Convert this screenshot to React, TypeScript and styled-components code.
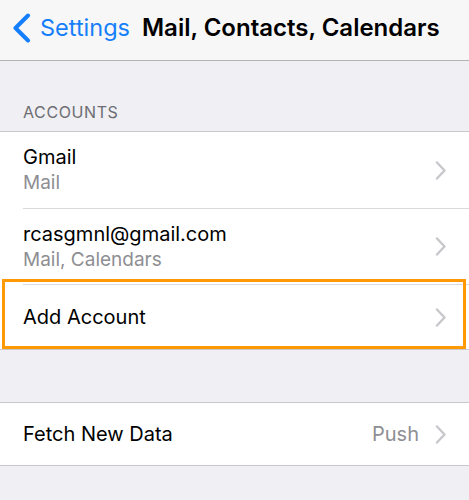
import React from "react";
import styled, { createGlobalStyle } from "styled-components";

const GlobalStyle = createGlobalStyle`
  html, body { margin: 0; padding: 0; }
  body {
    background: #efeff4;
    font-family: Inter, "Liberation Sans", sans-serif;
    -webkit-font-smoothing: antialiased;
  }
`;

const Screen = styled.div`
  width: 469px;
  height: 500px;
  background: #efeff4;
  overflow: hidden;
`;

const NavBar = styled.header`
  height: 61px;
  box-sizing: border-box;
  background: #f7f7f7;
  border-bottom: 1px solid #b2b2b2;
  display: flex;
  align-items: center;
  padding: 0 0 5px 12px;
`;

const BackButton = styled.div`
  display: flex;
  align-items: center;
  color: #157efb;
  font-size: 23.5px;
`;

const BackLabel = styled.span`
  margin-left: 9px;
`;

const Title = styled.h1`
  margin: 0 0 0 12px;
  font-size: 24px;
  font-weight: 600;
  color: #000;
`;

const SectionHeader = styled.div`
  height: 70px;
  box-sizing: border-box;
  display: flex;
  align-items: flex-end;
  padding: 0 23px 9px;
  font-size: 16px;
  letter-spacing: 0.6px;
  color: #6d6d72;
`;

const Group = styled.section<{ $gap?: number }>`
  background: #fff;
  border-top: 1px solid #c8c7cc;
  border-bottom: 1px solid #c8c7cc;
  margin-top: ${(p) => p.$gap ?? 0}px;
`;

const Row = styled.div<{ $height: number; $divider?: boolean }>`
  position: relative;
  height: ${(p) => p.$height}px;
  box-sizing: border-box;
  margin-left: 23px;
  padding-right: 22px;
  display: flex;
  align-items: center;
  border-bottom: ${(p) => (p.$divider ? "1px solid #d9d9de" : "none")};
`;

const Texts = styled.div`
  flex: 1;
  display: flex;
  flex-direction: column;
  min-width: 0;
`;

const Primary = styled.div`
  font-size: 20px;
  line-height: 26px;
  color: #000;
`;

const Secondary = styled.div`
  font-size: 19px;
  line-height: 26px;
  color: #8e8e93;
`;

const Value = styled.span`
  font-size: 20px;
  color: #8e8e93;
  margin-right: 16px;
`;

const Highlight = styled.div`
  position: absolute;
  left: -21px;
  right: 3px;
  top: -6px;
  bottom: 0;
  border: 3px solid #ff9a05;
  pointer-events: none;
`;

const Chevron = () => (
  <svg width="12" height="19" viewBox="0 0 12 19" aria-hidden="true">
    <path
      d="M2 1.5 L9.5 9.5 L2 17.5"
      fill="none"
      stroke="#c7c7cc"
      strokeWidth="2.4"
      strokeLinecap="round"
      strokeLinejoin="round"
    />
  </svg>
);

const BackChevron = () => (
  <svg width="19" height="30" viewBox="0 0 19 30" aria-hidden="true">
    <path
      d="M16 2.5 L3.5 15 L16 27.5"
      fill="none"
      stroke="#157efb"
      strokeWidth="4"
      strokeLinecap="round"
      strokeLinejoin="round"
    />
  </svg>
);

export default function App() {
  return (
    <Screen>
      <GlobalStyle />
      <NavBar>
        <BackButton>
          <BackChevron />
          <BackLabel>Settings</BackLabel>
        </BackButton>
        <Title>Mail, Contacts, Calendars</Title>
      </NavBar>

      <SectionHeader>ACCOUNTS</SectionHeader>
      <Group>
        <Row $height={77} $divider>
          <Texts>
            <Primary>Gmail</Primary>
            <Secondary>Mail</Secondary>
          </Texts>
          <Chevron />
        </Row>
        <Row $height={76} $divider>
          <Texts>
            <Primary>rcasgmnl@gmail.com</Primary>
            <Secondary>Mail, Calendars</Secondary>
          </Texts>
          <Chevron />
        </Row>
        <Row $height={64}>
          <Highlight />
          <Texts>
            <Primary>Add Account</Primary>
          </Texts>
          <Chevron />
        </Row>
      </Group>

      <Group $gap={52}>
        <Row $height={62}>
          <Texts>
            <Primary>Fetch New Data</Primary>
          </Texts>
          <Value>Push</Value>
          <Chevron />
        </Row>
      </Group>
    </Screen>
  );
}
